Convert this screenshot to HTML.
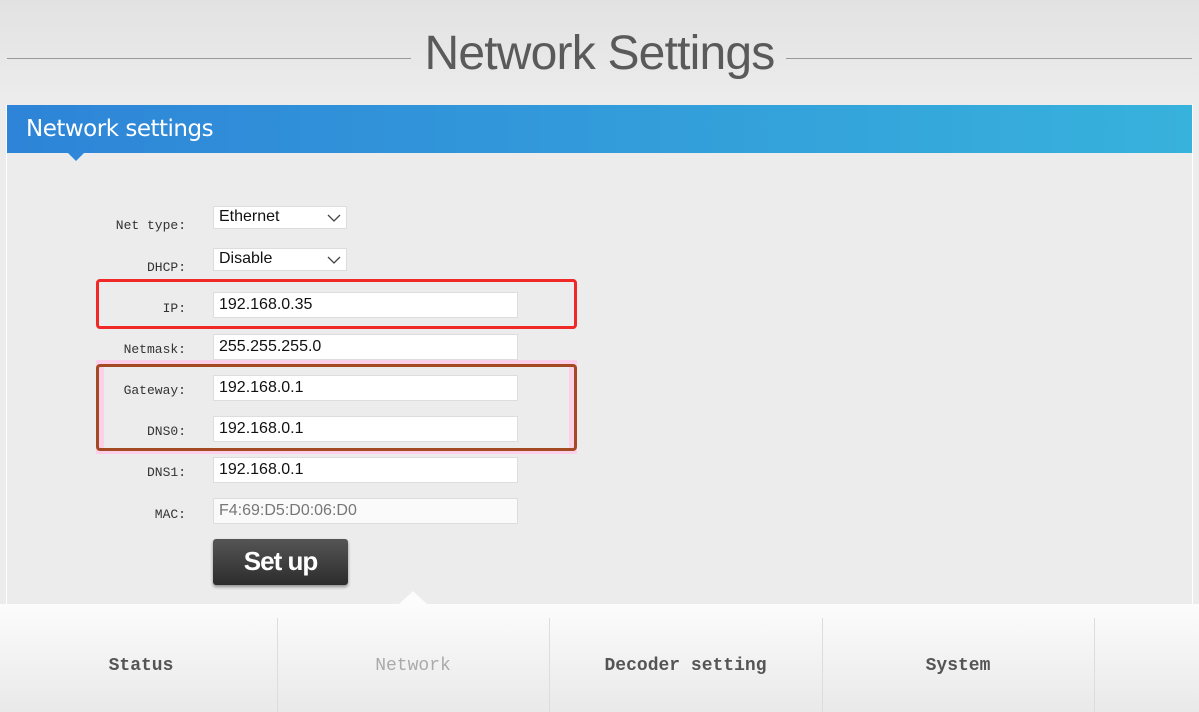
<!DOCTYPE html>
<html><head><style>
*{margin:0;padding:0;box-sizing:border-box}
html,body{width:1199px;height:712px;overflow:hidden}
body{background:linear-gradient(#e2e2e2,#ececec 100px);font-family:"Liberation Sans",sans-serif;position:relative}
.title{position:absolute;top:26px;left:0;width:1199px;text-align:center;font-size:48px;color:#5a5a5a;font-weight:normal;letter-spacing:-0.8px}
.line{position:absolute;top:58px;height:1px;background:#999}
.panel{position:absolute;left:6px;top:104px;width:1187px;height:520px;background:#ececec;border-left:1px solid #fff;border-right:1px solid #fff}
.hdr{position:absolute;left:7px;top:105px;width:1185px;height:48px;background:linear-gradient(90deg,#2e84d8,#37b2dc)}
.hdr span{position:absolute;left:19px;top:11px;color:#fff;font-size:23px;font-family:"DejaVu Sans",sans-serif;letter-spacing:-0.5px}
.notch{position:absolute;left:68px;top:153px;width:0;height:0;border-left:8px solid transparent;border-right:8px solid transparent;border-top:8px solid #2f87d9}
.lbl{position:absolute;right:1013px;font-family:"Liberation Mono",monospace;font-size:13px;color:#333;text-align:right}
.in{position:absolute;left:213px;width:305px;height:26px;background:#fff;border:1px solid #ddd;font-size:16px;color:#111;padding:3px 0 0 5px}
.sel{width:134px;height:23px;padding-top:1px}
.sel svg{position:absolute;right:5px;top:7px}
.btn{position:absolute;left:213px;top:539px;width:135px;height:46px;border-radius:3px;background:linear-gradient(#555,#2c2c2c);color:#fff;font-size:26px;font-weight:bold;text-align:center;line-height:44px;box-shadow:0 2px 3px rgba(0,0,0,.4);letter-spacing:-1px}
.nav{position:absolute;left:0;top:604px;width:1199px;height:108px;background:linear-gradient(#fcfcfc,#e9e9e9)}
.nav div{position:absolute;top:0;height:108px;line-height:124px;text-align:center;font-family:"Liberation Mono",monospace;font-weight:bold;font-size:18px;color:#555}
.div{position:absolute;top:618px;width:1px;height:94px;background:#ddd}
.tri{position:absolute;left:399px;top:591px;border-left:14px solid transparent;border-right:14px solid transparent;border-bottom:13px solid #fcfcfc}
</style></head><body>
<div class="line" style="left:7px;width:404px"></div>
<div class="line" style="left:786px;width:406px"></div>
<div class="title">Network Settings</div>
<div class="panel"></div>
<div class="hdr"><span>Network settings</span></div>
<div class="notch"></div>

<div class="lbl" style="top:218px">Net type:</div>
<div class="in sel" style="top:206px">Ethernet<svg width="14" height="8"><path d="M1 1L7 7L13 1" stroke="#444" fill="none" stroke-width="1.3"/></svg></div>
<div class="lbl" style="top:260px">DHCP:</div>
<div class="in sel" style="top:248px">Disable<svg width="14" height="8"><path d="M1 1L7 7L13 1" stroke="#444" fill="none" stroke-width="1.3"/></svg></div>

<div style="position:absolute;left:96px;top:360px;width:481px;height:94px;background:#fbd0e8"></div>
<div style="position:absolute;left:104px;top:364px;width:465px;height:86px;background:#ececec"></div>
<div style="position:absolute;left:96px;top:279px;width:481px;height:50px;border:3px solid #f02828;border-radius:4px"></div>
<div style="position:absolute;left:96px;top:364px;width:481px;height:87px;border:3px solid #a34a22;border-radius:4px"></div>

<div class="lbl" style="top:301px">IP:</div>
<div class="in" style="top:292px">192.168.0.35</div>
<div class="lbl" style="top:342px">Netmask:</div>
<div class="in" style="top:334px">255.255.255.0</div>
<div class="lbl" style="top:383px">Gateway:</div>
<div class="in" style="top:375px">192.168.0.1</div>
<div class="lbl" style="top:424px">DNS0:</div>
<div class="in" style="top:416px">192.168.0.1</div>
<div class="lbl" style="top:465px">DNS1:</div>
<div class="in" style="top:457px">192.168.0.1</div>
<div class="lbl" style="top:507px">MAC:</div>
<div class="in" style="top:498px;color:#777;background:#fafafa">F4:69:D5:D0:06:D0</div>
<div class="btn">Set up</div>

<div class="nav">
<div style="left:5px;width:272px">Status</div>
<div style="left:277px;width:272px;color:#aaa;font-weight:normal">Network</div>
<div style="left:549px;width:273px">Decoder setting</div>
<div style="left:822px;width:272px">System</div>
</div>
<div class="tri"></div>
<div class="div" style="left:277px"></div>
<div class="div" style="left:549px"></div>
<div class="div" style="left:822px"></div>
<div class="div" style="left:1094px"></div>
</body></html>
